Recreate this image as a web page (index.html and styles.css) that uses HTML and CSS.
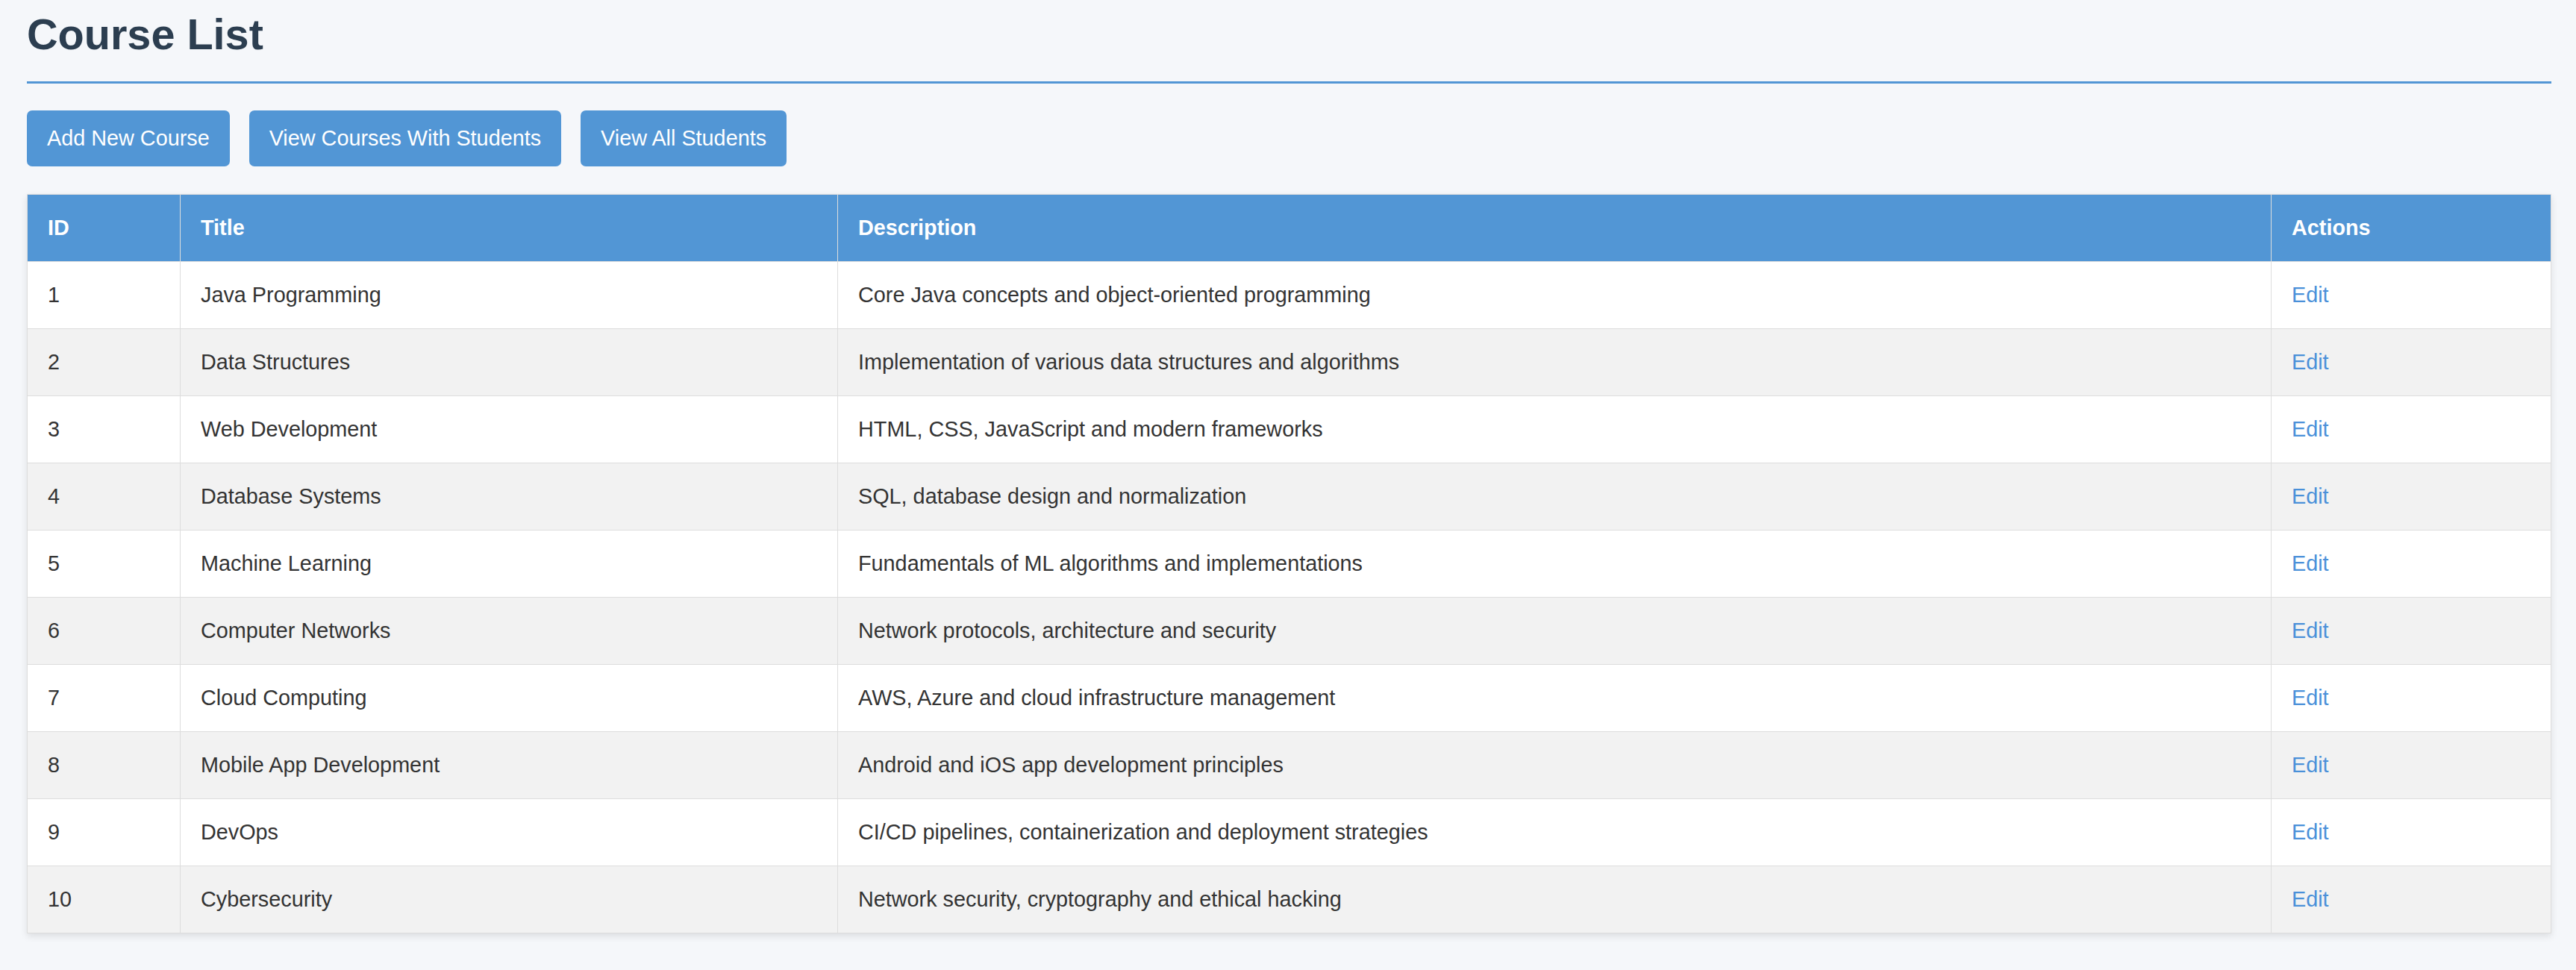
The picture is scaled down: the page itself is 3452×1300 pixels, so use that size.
FILE: index.html
```html
<!DOCTYPE html>
<html lang="en">
<head>
<meta charset="utf-8">
<title>Course List</title>
<link rel="stylesheet" href="styles.css">
</head>
<body>
<div class="page">
  <h1 class="page-title">Course List</h1>
  <div class="toolbar">
    <a class="btn" href="#">Add New Course</a>
    <a class="btn" href="#">View Courses With Students</a>
    <a class="btn" href="#">View All Students</a>
  </div>
  <table class="courses">
    <thead>
      <tr>
        <th class="col-id">ID</th>
        <th class="col-title">Title</th>
        <th class="col-desc">Description</th>
        <th class="col-actions">Actions</th>
      </tr>
    </thead>
    <tbody>
      <tr><td>1</td><td>Java Programming</td><td>Core Java concepts and object-oriented programming</td><td><a class="edit" href="#">Edit</a></td></tr>
      <tr><td>2</td><td>Data Structures</td><td>Implementation of various data structures and algorithms</td><td><a class="edit" href="#">Edit</a></td></tr>
      <tr><td>3</td><td>Web Development</td><td>HTML, CSS, JavaScript and modern frameworks</td><td><a class="edit" href="#">Edit</a></td></tr>
      <tr><td>4</td><td>Database Systems</td><td>SQL, database design and normalization</td><td><a class="edit" href="#">Edit</a></td></tr>
      <tr><td>5</td><td>Machine Learning</td><td>Fundamentals of ML algorithms and implementations</td><td><a class="edit" href="#">Edit</a></td></tr>
      <tr><td>6</td><td>Computer Networks</td><td>Network protocols, architecture and security</td><td><a class="edit" href="#">Edit</a></td></tr>
      <tr><td>7</td><td>Cloud Computing</td><td>AWS, Azure and cloud infrastructure management</td><td><a class="edit" href="#">Edit</a></td></tr>
      <tr><td>8</td><td>Mobile App Development</td><td>Android and iOS app development principles</td><td><a class="edit" href="#">Edit</a></td></tr>
      <tr><td>9</td><td>DevOps</td><td>CI/CD pipelines, containerization and deployment strategies</td><td><a class="edit" href="#">Edit</a></td></tr>
      <tr><td>10</td><td>Cybersecurity</td><td>Network security, cryptography and ethical hacking</td><td><a class="edit" href="#">Edit</a></td></tr>
    </tbody>
  </table>
</div>
</body>
</html>
```
FILE: styles.css
```css
html, body {
  margin: 0;
  padding: 0;
  background: #f5f7fa;
}

body {
  font-family: "Liberation Sans", Arial, Helvetica, sans-serif;
  font-size: 28.8px;
  color: #333333;
}

.page {
  padding: 13px 33px 20px 36px;
}

.page-title {
  margin: 0 0 36px 0;
  padding-bottom: 30px;
  font-size: 57.6px;
  line-height: 66px;
  font-weight: bold;
  color: #2c3e50;
  border-bottom: 3px solid #5296d5;
}

.toolbar {
  display: flex;
  gap: 26px;
  margin-bottom: 37px;
}

.btn {
  display: block;
  padding: 21px 27px;
  line-height: 33px;
  background: #5296d5;
  color: #ffffff;
  text-decoration: none;
  border-radius: 7px;
  font-size: 28.8px;
}

.courses {
  width: 100%;
  border-collapse: collapse;
  table-layout: fixed;
  background: #ffffff;
  box-shadow: 0 4px 9px rgba(0, 0, 0, 0.1);
}

.courses th,
.courses td {
  border: 1px solid #dddddd;
  padding: 28px 27px;
  line-height: 33px;
  text-align: left;
  vertical-align: middle;
}

.courses th {
  background: #5296d5;
  color: #ffffff;
  font-weight: bold;
}

.col-id { width: 150px; }
.col-title { width: 826px; }
.col-desc { width: 1866px; }
.col-actions { width: auto; }

.courses tbody tr:nth-child(even) td {
  background: #f2f2f2;
}

.edit {
  color: #4a90d9;
  text-decoration: none;
}
```
